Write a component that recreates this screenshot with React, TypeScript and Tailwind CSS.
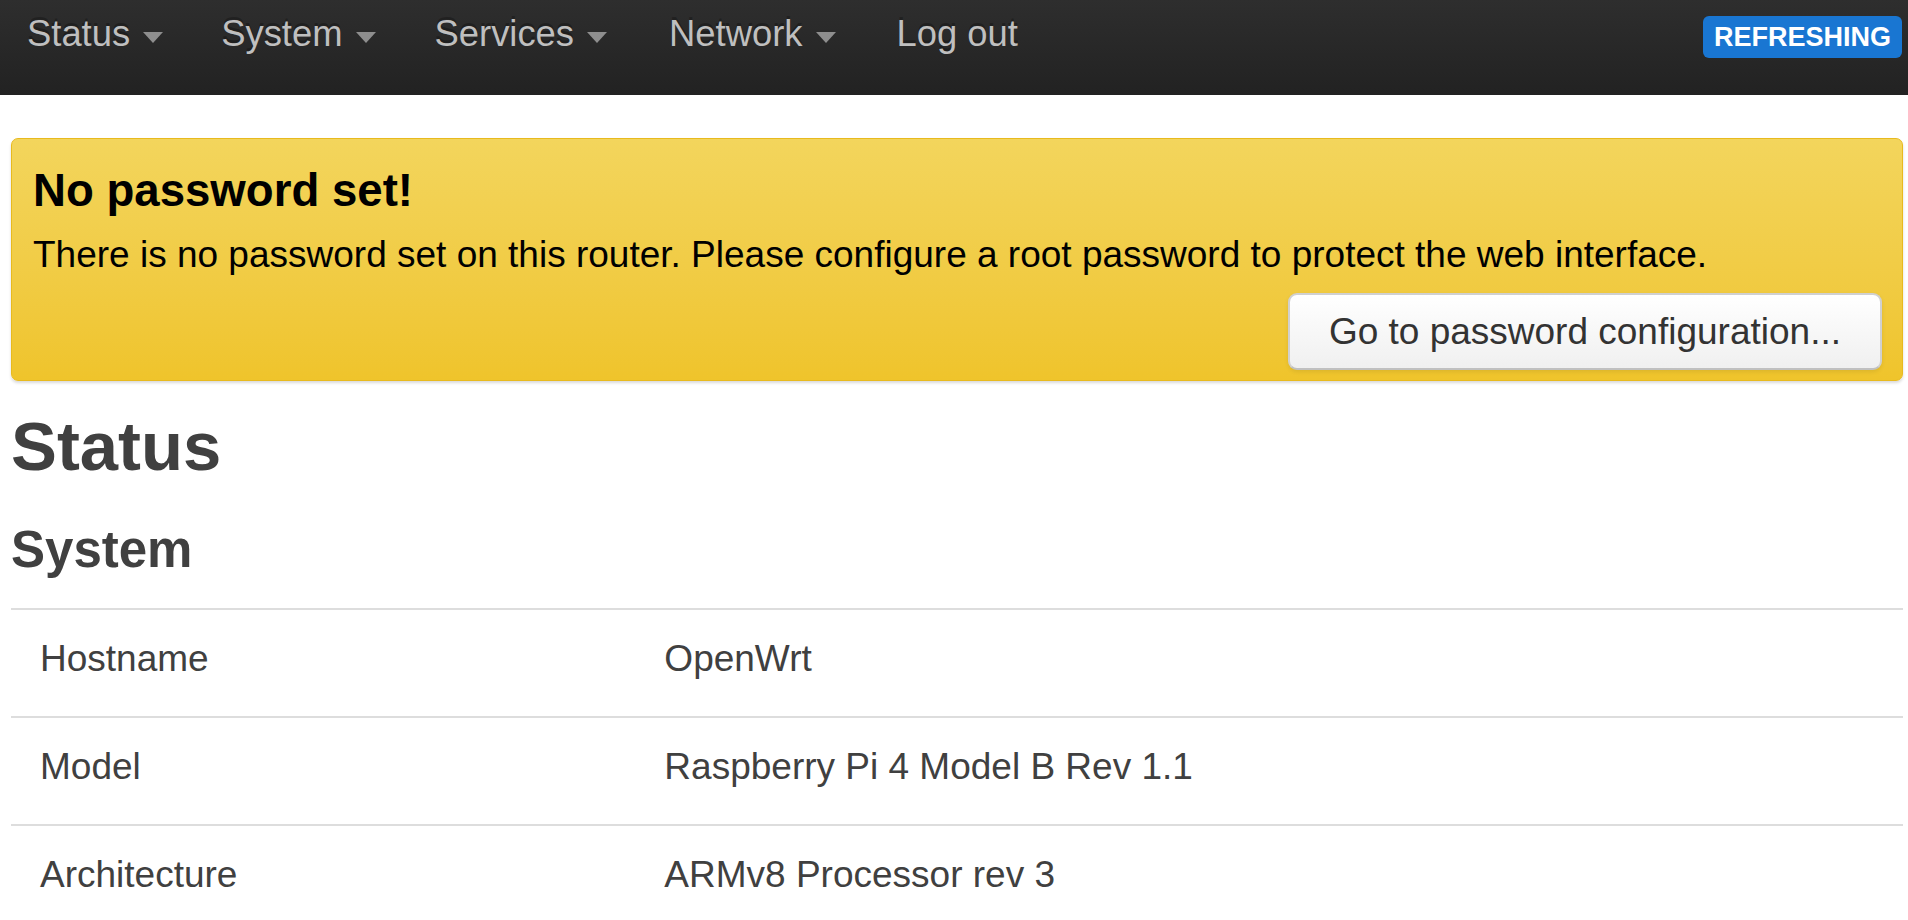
import React from 'react';

// top menu entries, the last one has no dropdown
const menu = [
  { label: 'Status', dropdown: true, space: '' },
  { label: 'System', dropdown: true, space: 'ml-[58px]' },
  { label: 'Services', dropdown: true, space: 'ml-[59px]' },
  { label: 'Network', dropdown: true, space: 'ml-[62px]' },
  { label: 'Log out', dropdown: false, space: 'ml-[61px]' },
];

const systemRows = [
  { name: 'Hostname', value: 'OpenWrt' },
  { name: 'Model', value: 'Raspberry Pi 4 Model B Rev 1.1' },
  { name: 'Architecture', value: 'ARMv8 Processor rev 3' },
];

const Caret: React.FC = () => (
  <span className="ml-[13px] mt-[23px] block h-0 w-0 border-x-[10.5px] border-t-[11px] border-x-transparent border-t-[#8e8e8e]" />
);

const Header: React.FC = () => (
  <header className="flex h-[95px] items-start bg-gradient-to-b from-[#2e2e2e] to-[#222222] pl-[27px] pr-[6px]">
    <nav className="flex items-start pt-[9px]">
      {menu.map((item) => (
        <a key={item.label} href="#" className={`flex items-start text-[36.4px] leading-[50.4px] text-[#bfbfbf] [text-shadow:0_-3px_0_rgba(0,0,0,0.25)] ${item.space}`}>
          <span>{item.label}</span>
          {item.dropdown && <Caret />}
        </a>
      ))}
    </nav>
    <span className="ml-auto mt-[16px] flex h-[42px] items-center rounded-[6px] bg-[#1976d2] px-[11px] text-[27px] font-bold text-white">
      REFRESHING
    </span>
  </header>
);

const PasswordAlert: React.FC = () => (
  <div className="mt-[43px] rounded-[7px] border border-[#e8ba1e] bg-gradient-to-b from-[#f3d55c] to-[#efc42b] pb-[10px] pl-[21px] pr-[20px] pt-[27px] text-black shadow-[0_2px_3px_rgba(0,0,0,0.15)]">
    <h4 className="text-[45.6px] font-bold leading-[50px]">No password set!</h4>
    <p className="mt-[14px] text-[37px] leading-[50.4px]">
      There is no password set on this router. Please configure a root password to protect the web interface.
    </p>
    <div className="mt-[13px] flex justify-end">
      <button className="flex h-[77px] items-center rounded-[9px] border-2 border-[#d0d0d0] border-b-[#c0c0c0] bg-gradient-to-b from-white to-[#f0f0f0] px-[39px] text-[37px] leading-[50.4px] text-[#333333] shadow-[0_2px_4px_rgba(0,0,0,0.08)]">
        Go to password configuration...
      </button>
    </div>
  </div>
);

export default function App() {
  return (
    <div className="min-h-screen bg-white font-['Liberation_Sans',Arial,sans-serif] text-[#404040]">
      <Header />
      <main className="ml-[11px] mr-[5px]">
        <PasswordAlert />

        <h2 className="mt-[26px] text-[68.8px] font-bold leading-[80px]">Status</h2>
        <h3 className="mt-[35px] text-[51px] font-bold leading-[56px]">System</h3>

        <table className="mt-[30px] w-full border-collapse text-[37px] leading-[50px]">
          <tbody>
            {systemRows.map((row) => (
              <tr key={row.name} className="border-t-2 border-[#dddddd]">
                <td className="w-[33%] pb-[32px] pl-[29px] pt-[24px] text-left align-top">{row.name}</td>
                <td className="pb-[32px] pl-[29px] pt-[24px] text-left align-top">{row.value}</td>
              </tr>
            ))}
          </tbody>
        </table>
      </main>
    </div>
  );
}
